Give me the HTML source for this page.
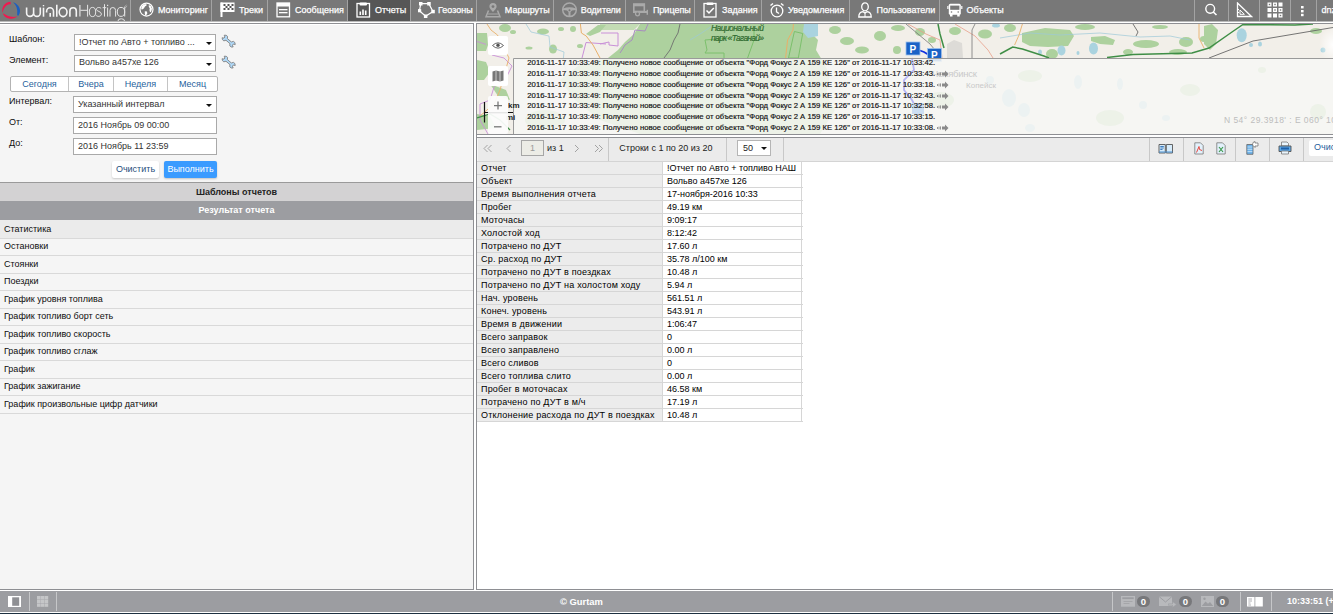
<!DOCTYPE html>
<html><head><meta charset="utf-8">
<style>
*{box-sizing:border-box;margin:0;padding:0}
html,body{width:1333px;height:614px;overflow:hidden;background:#fff;font-family:"Liberation Sans",sans-serif;font-size:9px;color:#222}
.a{position:absolute}
#hdr{left:0;top:0;width:1333px;height:21px;background:#787878}
#hdrline{left:0;top:21px;width:1333px;height:2px;background:#fff}
.sep{position:absolute;top:0;width:1px;height:21px;background:#a3a3a3}
.nt{position:absolute;top:5px;color:#fff;font-size:9px;line-height:11px;white-space:nowrap;-webkit-text-stroke:0.25px #fff}
.ni{position:absolute;top:3px}
#left{left:0;top:23px;width:474px;height:567px;background:#f5f5f5;border-right:1px solid #8e8f93;border-top:1px solid #8e8f93;border-bottom:1px solid #8e8f93}
.lbl{position:absolute;left:9px;color:#222;white-space:nowrap}
.sel{position:absolute;left:74px;width:143px;height:17px;background:#fff;border:1px solid #a9a9a9;padding-left:4px;line-height:15px;color:#333;white-space:nowrap}
.sel .arr{position:absolute;right:5px;top:6px;width:0;height:0;border-left:3px solid transparent;border-right:3px solid transparent;border-top:3px solid #222}
#right{left:476px;top:23px;width:857px;height:567px;background:#fff;border-left:1px solid #8e8f93;border-top:1px solid #8e8f93;border-bottom:1px solid #8e8f93}
#ftr{left:0;top:591px;width:1333px;height:21px;background:#9c9da1}
#ftrbot{left:0;top:613px;width:1333px;height:1px;background:#1d3040}

.lb{position:absolute;color:#0d0d0d;white-space:nowrap;font-size:9px;line-height:11px}
.sl{position:absolute;background:#fff;border:1px solid #a9a9a9;color:#333;white-space:nowrap;font-size:9px;line-height:11px}
.sl span{position:absolute;left:4px}
.ar{position:absolute;width:0;height:0;border-left:3px solid transparent;border-right:3px solid transparent;border-top:3.5px solid #111}
.bg{position:absolute;top:76px;height:16px;border:1px solid #b3b3b3;background:#fff;color:#1f5f9c;text-align:center;line-height:14px;font-size:9px}
.lr{position:absolute;left:0;width:473px;border-bottom:1px solid #d9d9d9;font-size:9px;line-height:11px;color:#0d0d0d;padding-left:4px;white-space:nowrap}

.msg{position:absolute;left:527.3px;font-size:7.7px;letter-spacing:0.02px;color:#111;white-space:nowrap;line-height:9px;-webkit-text-stroke:0.18px #111}
.msg i{display:inline-block;width:11px;height:7px;margin-left:3px;vertical-align:-1px}

.ts{position:absolute;top:138px;width:1px;height:23px;background:#c8c8c8}
.tr{position:absolute;left:477px;width:326px;height:13px;border-bottom:1px solid #d6d6d6;font-size:9px;line-height:12px;color:#000;white-space:nowrap}
.tr b{font-weight:normal;position:absolute;left:0;top:0;width:186px;height:12px;background:#ececec;border-right:1px solid #d6d6d6;padding-left:4px;letter-spacing:0.2px}
.tr u{text-decoration:none;position:absolute;left:186px;top:0;width:139px;height:12px;background:#fff;border-right:1px solid #d6d6d6;padding-left:4px}
</style></head><body>
<!-- HEADER -->
<div id="hdr" class="a">
<svg class="a" style="left:0;top:0" width="131" height="21" viewBox="0 0 131 21">
 <path d="M10.5 1.7 C6 1.6 2.6 5.5 2.3 9.5 C2.2 11 2.3 12 2.6 12.8 C3.2 10 4.2 7.2 6.5 5.4 C8 4.3 9.4 4.2 10.8 4.2 Z" fill="#f0194f"/>
 <path d="M2.8 13.2 C4 16.6 7.2 18.8 11 18.7 C13.6 18.6 15.8 17.8 17.4 16.6 C15 17.2 12.6 17.2 10.2 16.6 C7.2 15.8 4.8 14.2 2.8 13.2 Z" fill="#f0194f"/>
 <path d="M13.1 2.2 C17 3.5 19.8 6.5 20 10.5 C20.1 12.6 19.3 14.6 18.1 15.9 C17.4 15.5 17 14.8 17.2 13.8 C17.8 9.5 16.5 5.2 13.1 2.2 Z" fill="#1c5fc0"/>
 <g fill="none" stroke="#f4f4f4" stroke-width="1.6">
  <path d="M26.6 7.4 L26.6 12.9 A3.5 3.5 0 0 0 33.6 12.9 L33.6 7.4 M33.6 12.9 A3.35 3.5 0 0 0 40.3 12.9 L40.3 7.4"/>
  <path d="M43.5 7.7 L43.5 16.7"/>
  <path d="M46.6 12.4 L46.6 11.2 A3.45 3.45 0 0 1 53.5 11.2 L53.5 16.7 M50.2 13.1 L50.2 16.7"/>
  <path d="M56.8 4.8 L56.8 16.7"/>
  <ellipse cx="63.1" cy="12.1" rx="3.9" ry="4.5"/>
  <path d="M69.9 16.7 L69.9 11 A3.2 3.2 0 0 1 76.3 11 L76.3 16.7"/>
 </g>
 <rect x="42.8" y="5" width="1.4" height="1.3" fill="#f2f2f2"/>
 <g fill="none" stroke="#e6e6e6" stroke-width="1">
  <path d="M87.6 4.8 L87.6 16.6 M80 10.3 L87.6 10.3"/>
  <ellipse cx="92.5" cy="12" rx="3.2" ry="4.6"/>
  <path d="M101.2 8.6 C100 7 96.5 7 96.4 9.3 C96.4 11.6 101.4 11.2 101.4 14 C101.4 16.8 97 17 95.9 15.2"/>
  <path d="M104.5 4.2 L104.5 16.6 M102.6 7.7 L106.2 7.7"/>
  <path d="M107.6 7.6 L107.6 16.6"/>
  <path d="M110 16.6 L110 10.5 A2.8 3 0 0 1 115.6 10.5 L115.6 16.6"/>
  <ellipse cx="121" cy="11.9" rx="3.7" ry="4.5"/>
  <path d="M124.7 7.2 L124.7 16.5 M118 21 A3.2 2.2 0 0 1 124.5 21"/>
 </g>
 <path d="M79.9 5 L79.9 16.6" stroke="#c8c8c8" stroke-width="1.6"/>
 <rect x="107" y="4.8" width="1.2" height="1.2" fill="#e6e6e6"/>
 <path d="M123.8 7.5 L126.5 5 M124.8 8.3 L127.2 6" stroke="#d8d8d8" stroke-width="0.6"/>
</svg>
<div class="sep" style="left:130px"></div><div class="sep" style="left:211px"></div><div class="sep" style="left:267px"></div><div class="sep" style="left:347px"></div><div class="sep" style="left:410px"></div><div class="sep" style="left:476px"></div><div class="sep" style="left:553px"></div><div class="sep" style="left:625px"></div><div class="sep" style="left:694px"></div><div class="sep" style="left:761px"></div><div class="sep" style="left:849px"></div><div class="sep" style="left:939px"></div><div class="sep" style="left:1194px"></div><div class="sep" style="left:1228px"></div><div class="sep" style="left:1259px"></div><div class="sep" style="left:1290px"></div><div class="sep" style="left:1316px"></div>
<div class="a" style="left:348px;top:0;width:62px;height:21px;background:#565656"></div>
<!-- globe -->
<svg class="a" style="left:138px;top:1px" width="17" height="17" viewBox="0 0 17 17">
 <circle cx="8.5" cy="8.6" r="6.5" fill="none" stroke="#fff" stroke-width="1.2"/>
 <path d="M3.6 5.4 L5.4 3.6 L8.4 3 L8.6 4.4 L7 5.6 L5.8 7.6 L4.2 8.6 L3.2 8.2 Z" fill="#fff"/>
 <path d="M6.8 10.2 L9 10.4 L9.2 12.2 L8.2 14.6 L7.2 14.6 L6.8 12.4 Z" fill="#fff"/>
 <path d="M10.8 4 L12.8 5 L14 7.8 L13.2 10.8 L12 11.2 L11.4 9 L11.8 7.4 L10.8 5.8 Z" fill="#fff"/>
</svg>
<div class="nt" style="left:158px">Мониторинг</div>
<!-- flag -->
<svg class="a" style="left:220px;top:2px" width="16" height="16" viewBox="0 0 16 16">
 <rect x="0.5" y="0.5" width="2" height="14.5" fill="#fff"/>
 <rect x="0.5" y="0.5" width="14" height="9.5" fill="#fff"/>
 <g fill="#555"><rect x="3.5" y="2" width="2" height="2"/><rect x="7.5" y="2" width="2" height="2"/><rect x="11.5" y="2" width="2" height="2"/><rect x="5.5" y="4" width="2" height="2"/><rect x="9.5" y="4" width="2" height="2"/><rect x="3.5" y="6" width="2" height="2"/><rect x="7.5" y="6" width="2" height="2"/><rect x="11.5" y="6" width="2" height="2"/></g>
</svg>
<div class="nt" style="left:239px">Треки</div>
<!-- doc -->
<svg class="a" style="left:276px;top:2px" width="15" height="16" viewBox="0 0 15 16">
 <rect x="1" y="1" width="12.5" height="13.8" fill="none" stroke="#fff" stroke-width="1.3"/>
 <rect x="1" y="1" width="12.5" height="3.5" fill="#fff"/>
 <rect x="3" y="7" width="8.5" height="1.3" fill="#fff"/>
 <rect x="3" y="10" width="8.5" height="1.3" fill="#fff"/>
</svg>
<div class="nt" style="left:295px">Сообщения</div>
<!-- reports -->
<svg class="a" style="left:356px;top:2px" width="15" height="16" viewBox="0 0 15 16">
 <rect x="1" y="1.5" width="12.5" height="13.5" fill="none" stroke="#fff" stroke-width="1.3"/>
 <rect x="3.5" y="0.5" width="7.5" height="3" rx="1" fill="#fff"/>
 <rect x="3.5" y="9.5" width="1.6" height="3.5" fill="#fff"/><rect x="6.2" y="7.5" width="1.6" height="5.5" fill="#fff"/><rect x="8.9" y="8.5" width="1.6" height="4.5" fill="#fff"/>
</svg>
<div class="nt" style="left:375px">Отчеты</div>
<!-- geozones -->
<svg class="a" style="left:418px;top:2px" width="17" height="16" viewBox="0 0 17 16">
 <path d="M2.8 1.6 L10.8 1.6 L15 9.5 L7.6 14.3 L1.4 8.8 Z" fill="none" stroke="#fff" stroke-width="1.2"/>
 <g fill="#fff"><rect x="1" y="0" width="3.5" height="3.5"/><rect x="9.2" y="0" width="3.5" height="3.5"/><rect x="13.3" y="7.8" width="3.5" height="3.5"/><rect x="5.9" y="12.5" width="3.5" height="3.5"/><rect x="0" y="7.1" width="3.2" height="3.2"/></g>
</svg>
<div class="nt" style="left:438px">Геозоны</div>
<!-- route (gray) -->
<svg class="a" style="left:485px;top:2px" width="16" height="16" viewBox="0 0 16 16">
 <path d="M8 1 A3.6 3.6 0 0 1 11.6 4.6 C11.6 7 8 10 8 10 C8 10 4.4 7 4.4 4.6 A3.6 3.6 0 0 1 8 1 Z" fill="#aaa"/>
 <circle cx="8" cy="4.6" r="1.4" fill="#787878"/>
 <path d="M3.5 8.5 L1 14.8 L15 14.8 L12.5 8.5" fill="none" stroke="#aaa" stroke-width="1.5"/>
 <path d="M3 12 L13 12" stroke="#aaa" stroke-width="1"/>
</svg>
<div class="nt" style="left:504.8px">Маршруты</div>
<!-- wheel (gray) -->
<svg class="a" style="left:561px;top:2px" width="17" height="16" viewBox="0 0 17 16">
 <circle cx="8.5" cy="7.8" r="6.8" fill="none" stroke="#aaa" stroke-width="1.5"/>
 <path d="M2 6.5 Q8.5 4 15 6.5 L15 8 L11 8.5 L9.5 10 L9.5 14.5 L7.5 14.5 L7.5 10 L6 8.5 L2 8 Z" fill="#aaa"/>
 <circle cx="8.5" cy="8.2" r="1" fill="#787878"/>
</svg>
<div class="nt" style="left:580.8px">Водители</div>
<!-- trailer (gray) -->
<svg class="a" style="left:633px;top:3px" width="16" height="14" viewBox="0 0 16 14">
 <rect x="0.8" y="1" width="10.5" height="7.5" fill="none" stroke="#aaa" stroke-width="1.6"/>
 <rect x="0.8" y="1" width="10.5" height="2.3" fill="#aaa"/>
 <rect x="0" y="8" width="14" height="2" fill="#aaa"/>
 <rect x="13.6" y="6.8" width="1.4" height="5" fill="#aaa"/>
 <circle cx="4.5" cy="10.8" r="2" fill="#787878" stroke="#aaa" stroke-width="1.3"/>
</svg>
<div class="nt" style="left:652.9px">Прицепы</div>
<!-- task -->
<svg class="a" style="left:703px;top:2px" width="15" height="16" viewBox="0 0 15 16">
 <rect x="1" y="1.5" width="12" height="13.5" fill="none" stroke="#fff" stroke-width="1.3"/>
 <rect x="3.5" y="0.5" width="7" height="2.5" rx="1" fill="#fff"/>
 <path d="M3.5 8.5 L6 11 L10.8 6" fill="none" stroke="#fff" stroke-width="1.5"/>
</svg>
<div class="nt" style="left:722px">Задания</div>
<!-- clock -->
<svg class="a" style="left:769px;top:2px" width="16" height="16" viewBox="0 0 16 16">
 <circle cx="8" cy="9" r="5.8" fill="none" stroke="#fff" stroke-width="1.3"/>
 <path d="M7.5 5.5 L7.5 9.8 L10 11.5" fill="none" stroke="#fff" stroke-width="1.3"/>
 <path d="M1.5 3.5 L4 1.5 M14.5 3.5 L12 1.5" stroke="#fff" stroke-width="1.5"/>
</svg>
<div class="nt" style="left:788px">Уведомления</div>
<!-- user -->
<svg class="a" style="left:858px;top:2px" width="14" height="16" viewBox="0 0 14 16">
 <ellipse cx="7" cy="4.8" rx="3.3" ry="4" fill="none" stroke="#fff" stroke-width="1.3"/>
 <path d="M0.8 15 C0.8 11 3 9.8 5 9.6 L7 11 L9 9.6 C11 9.8 13.2 11 13.2 15 Z" fill="none" stroke="#fff" stroke-width="1.3"/>
 <path d="M7 11 L7 15" stroke="#fff" stroke-width="1"/>
</svg>
<div class="nt" style="left:876.6px">Пользователи</div>
<!-- bus -->
<svg class="a" style="left:947px;top:3px" width="16" height="14" viewBox="0 0 16 14">
 <rect x="1.8" y="0.8" width="12" height="11" rx="1.5" fill="#fff"/>
 <rect x="3.2" y="2.6" width="9.2" height="4.2" fill="#787878"/>
 <rect x="0.3" y="3" width="1.2" height="3" fill="#fff"/><rect x="14.2" y="3" width="1.2" height="3" fill="#fff"/>
 <rect x="3" y="11" width="2.5" height="2.5" fill="#fff"/><rect x="10.2" y="11" width="2.5" height="2.5" fill="#fff"/>
 <circle cx="4.5" cy="9" r="0.8" fill="#787878"/><circle cx="11.2" cy="9" r="0.8" fill="#787878"/>
</svg>
<div class="nt" style="left:966.6px">Объекты</div>
<!-- search -->
<svg class="a" style="left:1203px;top:3px" width="16" height="15" viewBox="0 0 16 15">
 <circle cx="7.2" cy="5.8" r="4.4" fill="none" stroke="#fff" stroke-width="1.4"/>
 <path d="M10.3 9 L13.5 12" stroke="#fff" stroke-width="1.6"/>
</svg>
<!-- ruler -->
<svg class="a" style="left:1236px;top:2px" width="17" height="16" viewBox="0 0 17 16">
 <path d="M1.5 1 L1.5 14.5 L15.5 14.5 Z" fill="none" stroke="#fff" stroke-width="1.3"/>
 <path d="M4 8 L4 12.3 L8.4 12.3 Z" fill="none" stroke="#fff" stroke-width="1"/>
 <path d="M1.5 7.5 L3 7.5 M1.5 10.5 L3 10.5" stroke="#fff" stroke-width="1"/>
</svg>
<!-- grid -->
<svg class="a" style="left:1267px;top:2px" width="16" height="16" viewBox="0 0 16 16">
 <g fill="#fff"><rect x="0.5" y="0.5" width="4" height="4"/><rect x="6" y="0.5" width="4" height="4"/><rect x="11.5" y="0.5" width="4" height="4"/><rect x="0.5" y="6" width="4" height="4"/><rect x="6" y="6" width="4" height="4"/><rect x="11.5" y="6" width="4" height="4"/><rect x="0.5" y="11.5" width="4" height="4"/><rect x="6" y="11.5" width="4" height="4"/><rect x="11.5" y="11.5" width="4" height="4"/></g>
 <g fill="#787878"><rect x="1.8" y="1.8" width="1.4" height="1.4"/><rect x="7.3" y="1.8" width="1.4" height="1.4"/><rect x="7.3" y="7.3" width="1.4" height="1.4"/><rect x="12.8" y="7.3" width="1.4" height="1.4"/><rect x="12.8" y="12.8" width="1.4" height="1.4"/></g>
</svg>
<!-- dots -->
<svg class="a" style="left:1300px;top:5px" width="5" height="12" viewBox="0 0 5 12">
 <g fill="#fff"><rect x="1" y="1" width="2.6" height="2.4"/><rect x="1" y="5" width="2.6" height="2.4"/><rect x="1" y="8.8" width="2.6" height="2.4"/></g>
</svg>
<div class="nt" style="left:1321.5px">dnz</div>
</div>
<div id="hdrline" class="a"></div><div class="a" style="left:0;top:21px;width:1333px;height:1px;background:#b9b9b9"></div>

<!-- LEFT PANEL -->
<div id="left" class="a"></div>
<div class="a" style="left:0;top:24px;width:473px;height:1px;background:#fff"></div>
<div class="a" style="left:472px;top:24px;width:1px;height:158px;background:#fbfbfb"></div>
<div class="lb" style="left:9px;top:33.5px">Шаблон:</div>
<div class="sl" style="left:74px;top:34px;width:142px;height:17px"><span style="top:1.5px">!Отчет по Авто + топливо ...</span><i class="ar" style="left:130.5px;top:7px"></i></div>
<svg class="a" style="left:221px;top:34px" width="15" height="15" viewBox="0 0 15 15"><g transform="translate(7.5 7.5) scale(0.9) translate(-7.5 -7.5) rotate(40 7.5 7.3)"><path d="M-0.5 5.2 L1.2 3.8 L3.2 3.8 L4.6 5.8 L10.4 5.8 L11.8 3.8 L13.8 3.8 L15.5 5.2 L13.6 6.2 L13.6 7.8 L15.5 8.8 L13.8 10.2 L11.8 10.2 L10.4 8.2 L4.6 8.2 L3.2 10.2 L1.2 10.2 L-0.5 8.8 L1.4 7.8 L1.4 6.2 Z" fill="#b0d9f8" stroke="#7d7d7d" stroke-width="0.9" stroke-linejoin="round"/></g></svg>
<div class="lb" style="left:9px;top:54.5px">Элемент:</div>
<div class="sl" style="left:74px;top:55px;width:142px;height:17px"><span style="top:1.2px">Вольво а457хе 126</span><i class="ar" style="left:130.5px;top:7px"></i></div>
<svg class="a" style="left:221px;top:55px" width="15" height="15" viewBox="0 0 15 15"><g transform="translate(7.5 7.5) scale(0.9) translate(-7.5 -7.5) rotate(40 7.5 7.3)"><path d="M-0.5 5.2 L1.2 3.8 L3.2 3.8 L4.6 5.8 L10.4 5.8 L11.8 3.8 L13.8 3.8 L15.5 5.2 L13.6 6.2 L13.6 7.8 L15.5 8.8 L13.8 10.2 L11.8 10.2 L10.4 8.2 L4.6 8.2 L3.2 10.2 L1.2 10.2 L-0.5 8.8 L1.4 7.8 L1.4 6.2 Z" fill="#b0d9f8" stroke="#7d7d7d" stroke-width="0.9" stroke-linejoin="round"/></g></svg>
<div class="a" style="left:10px;top:76px;width:208px;height:16px;border:1px solid #b3b3b3;border-radius:2px;background:#fff"></div>
<div class="a" style="left:68px;top:77px;width:1px;height:14px;background:#c4c4c4"></div>
<div class="a" style="left:113px;top:77px;width:1px;height:14px;background:#c4c4c4"></div>
<div class="a" style="left:167px;top:77px;width:1px;height:14px;background:#c4c4c4"></div>
<div class="lb" style="left:11px;top:78.5px;width:57px;text-align:center;color:#1f5f9c">Сегодня</div>
<div class="lb" style="left:69px;top:78.5px;width:44px;text-align:center;color:#1f5f9c">Вчера</div>
<div class="lb" style="left:114px;top:78.5px;width:53px;text-align:center;color:#1f5f9c">Неделя</div>
<div class="lb" style="left:168px;top:78.5px;width:49px;text-align:center;color:#1f5f9c">Месяц</div>
<div class="lb" style="left:9px;top:95.7px">Интервал:</div>
<div class="sl" style="left:73px;top:96px;width:144px;height:17px"><span style="top:1.8px">Указанный интервал</span><i class="ar" style="left:131.5px;top:7px"></i></div>
<div class="lb" style="left:9px;top:116.6px">От:</div>
<div class="sl" style="left:73px;top:117px;width:144px;height:17px"><span style="top:2px">2016 Ноябрь 09 00:00</span></div>
<div class="lb" style="left:9px;top:137.8px">До:</div>
<div class="sl" style="left:73px;top:138px;width:144px;height:17px"><span style="top:2px">2016 Ноябрь 11 23:59</span></div>
<div class="a" style="left:112px;top:161px;width:47px;height:17px;background:#fff;border-radius:2px;box-shadow:0 1px 2px rgba(0,0,0,0.18);color:#1f4f7c;text-align:center;line-height:17px">Очистить</div>
<div class="a" style="left:164px;top:161px;width:53px;height:17px;background:#3a9bff;border-radius:2px;box-shadow:0 1px 2px rgba(0,0,0,0.2);color:#fff;text-align:center;line-height:17px">Выполнить</div>
<div class="a" style="left:0;top:182px;width:473px;height:19px;background:#d3d2d3;border-top:1px solid #9a9a9a;color:#222;font-weight:bold;text-align:center;line-height:18px">Шаблоны отчетов</div>
<div class="a" style="left:0;top:201px;width:473px;height:19px;background:#9c9da1;color:#fff;font-weight:bold;text-align:center;line-height:18px">Результат отчета</div>
<div class="lr" style="top:220px;height:19px;padding-top:4px;background:#ebebeb;">Статистика</div>
<div class="lr" style="top:239px;height:17px;padding-top:2px;">Остановки</div>
<div class="lr" style="top:256px;height:18px;padding-top:3px;">Стоянки</div>
<div class="lr" style="top:274px;height:17px;padding-top:2px;">Поездки</div>
<div class="lr" style="top:291px;height:18px;padding-top:3px;">График уровня топлива</div>
<div class="lr" style="top:309px;height:17px;padding-top:2px;">График топливо борт сеть</div>
<div class="lr" style="top:326px;height:18px;padding-top:3px;">График топливо скорость</div>
<div class="lr" style="top:344px;height:17px;padding-top:2px;">График топливо сглаж</div>
<div class="lr" style="top:361px;height:18px;padding-top:3px;">График</div>
<div class="lr" style="top:379px;height:17px;padding-top:2px;">График зажигание</div>
<div class="lr" style="top:396px;height:18px;padding-top:3px;">График произвольные цифр датчики</div>


<!-- RIGHT PANEL -->
<div id="right" class="a"></div>
<!-- MAP -->
<svg class="a" style="left:477px;top:24px" width="856" height="110" viewBox="477 24 856 110">
 <rect x="477" y="24" width="856" height="110" fill="#f2efe9"/>
 <g fill="#add19e">
  <path d="M600 24 L813 24 L810 32 L818 40 L816 50 L822 60 L830 75 L826 95 L835 110 L820 134 L640 134 L600 120 L575 100 L560 80 L578 66 L608 58 L618 50 L625 42 L634 34 L640 24 Z"/>
  <path d="M600 24 L640 24 L634 30 L600 30 Z" fill="#c3dcb4"/>
  <path d="M477 33 L487 33 L488 45 L486 51 L477 51 Z"/>
  <path d="M477 60 L486 62 L490 72 L484 80 L477 80 Z"/>
  <path d="M490 84 L506 90 L510 100 L498 96 Z"/>
  <path d="M477 114 L490 116 L496 128 L477 130 Z"/>
  <ellipse cx="505" cy="28" rx="6" ry="4"/>
  <ellipse cx="513" cy="32" rx="3" ry="2"/>
  <ellipse cx="543" cy="31.5" rx="6" ry="3"/>
  <ellipse cx="553" cy="49" rx="4" ry="4.5"/>
  <ellipse cx="529" cy="48" rx="3.5" ry="1.5"/>
  <ellipse cx="561" cy="29" rx="3" ry="2"/>
  <ellipse cx="573" cy="29" rx="3" ry="3"/>
  <path d="M586 34 L598 25 L606 25 L600 32 L590 36 Z"/>
  <ellipse cx="580" cy="46" rx="3" ry="2"/>
  <ellipse cx="835" cy="30" rx="6" ry="4"/>
  <ellipse cx="847" cy="41" rx="7" ry="4"/>
  <ellipse cx="862" cy="50" rx="7" ry="3.5"/>
  <ellipse cx="880" cy="36" rx="6" ry="5"/>
  <ellipse cx="898" cy="28" rx="7" ry="3"/>
  <ellipse cx="897" cy="50" rx="4" ry="4"/>
  <ellipse cx="920" cy="32" rx="5" ry="4"/>
  <ellipse cx="932" cy="40" rx="4" ry="3"/>
  <ellipse cx="955" cy="31" rx="6" ry="4"/>
  <ellipse cx="985" cy="34" rx="7" ry="4.5"/>
  <ellipse cx="1010" cy="28" rx="6" ry="4"/>
  <path d="M1022 33 L1045 28 L1070 30 L1074 36 L1068 46 L1048 47 L1030 46 L1022 42 Z"/>
  <ellipse cx="1052" cy="54" rx="6" ry="5"/>
  <ellipse cx="1085" cy="27" rx="10" ry="3"/>
  <path d="M1091 37 L1105 36 L1115 40 L1113 45 L1100 44 L1091 41 Z"/>
  <ellipse cx="1128" cy="52" rx="5" ry="3"/>
  <ellipse cx="1146" cy="44" rx="13" ry="4"/>
  <ellipse cx="1186" cy="42" rx="7" ry="5"/>
  <ellipse cx="1204" cy="39" rx="4" ry="3"/>
  <path d="M1204 26 L1212 24 L1218 30 L1216 44 L1210 50 L1204 44 Z"/>
  <ellipse cx="1178" cy="52" rx="9" ry="3"/>
  <ellipse cx="1316" cy="31" rx="6" ry="3"/>
  <ellipse cx="1160" cy="27" rx="8" ry="2"/>
  <!-- under overlay -->
  <ellipse cx="940" cy="100" rx="14" ry="8"/>
  <ellipse cx="1030" cy="76" rx="12" ry="6"/>
  <ellipse cx="1110" cy="118" rx="14" ry="8"/>
  <ellipse cx="1190" cy="90" rx="10" ry="6"/>
  <ellipse cx="1318" cy="112" rx="8" ry="8"/>
  <ellipse cx="1262" cy="70" rx="4" ry="3"/>
  <ellipse cx="545" cy="120" rx="20" ry="10"/>
 </g>
 <g fill="#aad3df">
  <path d="M804 24 L818 24 L818 36 L808 38 L803 32 Z"/>
  <ellipse cx="1061.5" cy="50.5" rx="4" ry="5"/>
  <ellipse cx="1040" cy="52" rx="2" ry="2.5"/>
  <ellipse cx="1093.5" cy="48.5" rx="4.5" ry="6"/>
  <ellipse cx="1078" cy="53" rx="1.5" ry="2"/>
  <ellipse cx="996" cy="25.5" rx="4" ry="2"/>
  <ellipse cx="1241.7" cy="35.2" rx="5" ry="7"/>
  <ellipse cx="1251" cy="45" rx="2" ry="2"/>
  <ellipse cx="1260" cy="44" rx="2" ry="2.5"/>
  <ellipse cx="1323" cy="50" rx="2.5" ry="2.5"/>
  <ellipse cx="1009" cy="98" rx="7" ry="9"/>
  <ellipse cx="1024" cy="110" rx="6" ry="7"/>
  <ellipse cx="1078" cy="82" rx="4" ry="7"/>
  <ellipse cx="1120" cy="84" rx="3" ry="6"/>
  <ellipse cx="990" cy="80" rx="4" ry="4"/>
  <ellipse cx="1143" cy="105" rx="4" ry="4"/>
  <ellipse cx="1030" cy="128" rx="5" ry="4"/>
  <ellipse cx="1166" cy="118" rx="4" ry="3"/>
 </g>
 <g fill="none" stroke="#9cc8d8" stroke-width="0.7">
  <path d="M526 24 L531 32 L549 36 L550 47 L564 52 L563 62 L570 80"/>
  <path d="M1000 38 L1030 33 L1060 35 L1100 33 L1140 37 L1170 36 L1190 40"/>
  <path d="M690 40 L700 34 L712 26"/>
 </g>
 <path d="M947 44 L954 40 L962 43 L963 58 L947 58 Z" fill="#dddbd7"/>
 <!-- boundaries -->
 <path d="M601 33 L618 33 L618 46 L609 45 L609 42 L600 44" fill="none" stroke="#c990d8" stroke-width="1"/>
 <path d="M582 58 L586 42.5 L606 44" fill="none" stroke="#c990d8" stroke-width="1"/>
 <path d="M648 24 L645 31 L635 30 L632 40 L625 45 L622 50 L620 53" fill="none" stroke="#a88cc0" stroke-width="1"/>
 <path d="M477 41.5 L486 44.4 M492 55 L504 58 L512 66 L505 80 L495 84 L490 100 L480 104 L480 120 L488 134" fill="none" stroke="#c990d8" stroke-width="0.9"/>
 <path d="M754 30 L754 40 L747.6 58 M794.4 31.5 L802.7 33.5 L798.3 58 L788.5 58 Z M730 38 L705 40 L707 50 L705 53 L724 53 L724 58" fill="none" stroke="#7cc06c" stroke-width="1"/>
 <!-- roads -->
 <path d="M487 24 L491 30 L497.5 35 L509 58 L500 90 L494 104 L480 116" fill="none" stroke="#e9b06a" stroke-width="0.9"/>
 <path d="M580.4 24 L581.4 33 L586.2 36 L593 45 L600 58" fill="none" stroke="#e9b06a" stroke-width="1"/>
 <path d="M793.4 24 L793 30 L787.6 40 L785.6 58" fill="none" stroke="#e9b06a" stroke-width="1"/>
 <path d="M1022.4 24 L1019 35 L1014.6 45" fill="none" stroke="#e9b06a" stroke-width="0.9"/>
 <path d="M1199 24 L1199 38 L1204 48" fill="none" stroke="#e9b06a" stroke-width="0.9"/>
 <path d="M908 24 L926 34 L940 40 L942 58 M955 24 L975 36 L988 50 L993 58" fill="none" stroke="#e8a08a" stroke-width="0.8"/>
 <path d="M680 24 L678 33 L674 40 L670 50 L664 58" fill="none" stroke="#6e6e6e" stroke-width="0.9"/>
 <path d="M906 24 L930 44 L935 50" fill="none" stroke="#777" stroke-width="0.8"/>
 <path d="M975 24 L972 30 L972 58" fill="none" stroke="#777" stroke-width="0.8"/>
 <path d="M1133 24 L1138 32 L1136 36" fill="none" stroke="#555" stroke-width="0.8"/>
 <path d="M1209 58 L1253 41 L1333 27.5" fill="none" stroke="#666" stroke-width="0.9"/>
 <path d="M938 24 L940 34 L944 48" fill="none" stroke="#3f8e46" stroke-width="1.5"/>
 <path d="M477 118 L490 114 L500 120 L510 130" fill="none" stroke="#3f8e46" stroke-width="1.3"/>
 <path d="M1000 54 L1012.7 47 L1022.4 49 L1043.9 56 L1049 58 M1107 57.5 L1133 54.5 L1192 53 L1209 48 L1232 32 L1243 24.5 L1295 25 L1313 24" fill="none" stroke="#3f8e46" stroke-width="1.5"/>
 <text x="711" y="30.5" font-family="Liberation Sans" font-style="italic" font-size="8.5" fill="#2f6a2f" stroke="#2f6a2f" stroke-width="0.2" textLength="53">Национальный</text>
 <text x="711" y="40.5" font-family="Liberation Sans" font-style="italic" font-size="8.5" fill="#2f6a2f" stroke="#2f6a2f" stroke-width="0.2" textLength="53">парк «Таганай»</text>
 <radialGradient id="gl" cx="0.5" cy="0.5" r="0.5"><stop offset="0" stop-color="#fff" stop-opacity="0.95"/><stop offset="1" stop-color="#fff" stop-opacity="0"/></radialGradient>
 <ellipse cx="1333" cy="45" rx="14" ry="18" fill="url(#gl)"/>
 <!-- parking markers and track -->
 <path d="M913 48 L924 52 L934 58" fill="none" stroke="#1030e0" stroke-width="1.8"/>
 <rect x="906" y="42" width="14" height="13" fill="#1a62c6" stroke="#9cc2ee" stroke-width="0.8"/>
 <text x="909.5" y="52.5" font-family="Liberation Sans" font-weight="bold" font-size="10" fill="#fff">P</text>
 <rect x="927.5" y="48.5" width="14" height="13" fill="#1a62c6" stroke="#9cc2ee" stroke-width="0.8"/>
 <text x="931" y="59" font-family="Liberation Sans" font-weight="bold" font-size="10" fill="#fff">P</text>
 <!-- overlay -->
 <rect x="513" y="58" width="820" height="76" fill="#f7f7f5" opacity="0.86"/>
 <path d="M912 58 L914 70 L904 80 L904 90 L912 100 L915 106" fill="none" stroke="#b4b4f4" stroke-width="1.8"/>
 <rect x="912" y="103" width="12" height="11" fill="#c8dcf2" opacity="0.9"/>
 <text x="932" y="77" font-family="Liberation Sans" font-size="9.5" fill="#c9c9c9" textLength="45">Челябинск</text>
 <text x="966" y="88" font-family="Liberation Sans" font-size="8" fill="#c9c9c9" textLength="30">Копейск</text>
 <path d="M513.5 134 L513.5 58.5 L1333 58.5" fill="none" stroke="#9a9a9a" stroke-width="1"/>
 <text x="1224" y="123" font-family="Liberation Sans" font-size="8.5" fill="#bdbdbd" textLength="112">N 54° 29.3918' : E 060° 10</text>
 <!-- buttons -->
 <rect x="488" y="36" width="20" height="19" rx="2" fill="#fff"/>
 <path d="M492.5 45.5 Q498 40.2 503.5 45.5 Q498 50.8 492.5 45.5 Z" fill="none" stroke="#555" stroke-width="0.9"/>
 <circle cx="498" cy="45.2" r="1.7" fill="#555"/>
 <rect x="488" y="66" width="20" height="20" rx="2" fill="#fff"/>
 <path d="M492.5 71.5 L496 70.5 L500 71.5 L503.5 70.5 L503.5 80.5 L500 81.5 L496 80.5 L492.5 81.5 Z" fill="#777"/>
 <path d="M496 70.5 L496 80.5 M500 71.5 L500 81.5" stroke="#fff" stroke-width="0.6"/>
 <path d="M484.5 102 L484.5 122.5 M484.5 112.5 L513 112.5" stroke="#111" stroke-width="1.2"/>
 <text x="508" y="108" font-family="Liberation Sans" font-weight="bold" font-size="8" fill="#222">km</text>
 <text x="506" y="120" font-family="Liberation Sans" font-weight="bold" font-size="8" fill="#222">mi</text>
 <rect x="488" y="96" width="20" height="38" rx="2" fill="#fcfcfc" opacity="0.94"/>
 <path d="M494 105.6 L502 105.6 M498 101.6 L498 109.6" stroke="#777" stroke-width="1.3"/>
 <path d="M494 126.8 L501.5 126.8" stroke="#777" stroke-width="1.3"/>
 <path d="M488 112.8 L508 112.8" stroke="#e2e2e2" stroke-width="1"/>
</svg>
<div class="a" style="left:513px;top:59px;width:820px;height:75px;overflow:hidden">
<div class="msg" style="left:14.3px;top:-0.9px">2016-11-17 10:33:49: Получено новое сообщение от объекта "Форд Фокус 2 А 159 КЕ 126" от 2016-11-17 10:33:42.</div>
<div class="msg" style="left:14.3px;top:9.9px">2016-11-17 10:33:49: Получено новое сообщение от объекта "Форд Фокус 2 А 159 КЕ 126" от 2016-11-17 10:33:43.</div>
<svg style="position:absolute;left:423.5px;top:11.3px" width="12" height="8" viewBox="0 0 12 8"><path d="M0.5 3 L0.5 5 M2 2.6 L2 5.4 M3.5 2.4 L3.5 5.6" stroke="#8a8a8a" stroke-width="0.9"/><path d="M5 2.4 L8 2.4 L8 0.5 L11.5 4 L8 7.5 L8 5.6 L5 5.6 Z" fill="#8a8a8a"/></svg>
<div class="msg" style="left:14.3px;top:20.7px">2016-11-17 10:33:49: Получено новое сообщение от объекта "Форд Фокус 2 А 159 КЕ 126" от 2016-11-17 10:33:18.</div>
<svg style="position:absolute;left:423.5px;top:22.1px" width="12" height="8" viewBox="0 0 12 8"><path d="M0.5 3 L0.5 5 M2 2.6 L2 5.4 M3.5 2.4 L3.5 5.6" stroke="#8a8a8a" stroke-width="0.9"/><path d="M5 2.4 L8 2.4 L8 0.5 L11.5 4 L8 7.5 L8 5.6 L5 5.6 Z" fill="#8a8a8a"/></svg>
<div class="msg" style="left:14.3px;top:31.5px">2016-11-17 10:33:49: Получено новое сообщение от объекта "Форд Фокус 2 А 159 КЕ 126" от 2016-11-17 10:32:43.</div>
<svg style="position:absolute;left:423.5px;top:32.9px" width="12" height="8" viewBox="0 0 12 8"><path d="M0.5 3 L0.5 5 M2 2.6 L2 5.4 M3.5 2.4 L3.5 5.6" stroke="#8a8a8a" stroke-width="0.9"/><path d="M5 2.4 L8 2.4 L8 0.5 L11.5 4 L8 7.5 L8 5.6 L5 5.6 Z" fill="#8a8a8a"/></svg>
<div class="msg" style="left:14.3px;top:42.3px">2016-11-17 10:33:49: Получено новое сообщение от объекта "Форд Фокус 2 А 159 КЕ 126" от 2016-11-17 10:32:58.</div>
<svg style="position:absolute;left:423.5px;top:43.7px" width="12" height="8" viewBox="0 0 12 8"><path d="M0.5 3 L0.5 5 M2 2.6 L2 5.4 M3.5 2.4 L3.5 5.6" stroke="#8a8a8a" stroke-width="0.9"/><path d="M5 2.4 L8 2.4 L8 0.5 L11.5 4 L8 7.5 L8 5.6 L5 5.6 Z" fill="#8a8a8a"/></svg>
<div class="msg" style="left:14.3px;top:53.1px">2016-11-17 10:33:49: Получено новое сообщение от объекта "Форд Фокус 2 А 159 КЕ 126" от 2016-11-17 10:33:15.</div>
<div class="msg" style="left:14.3px;top:63.9px">2016-11-17 10:33:49: Получено новое сообщение от объекта "Форд Фокус 2 А 159 КЕ 126" от 2016-11-17 10:33:08.</div>
<svg style="position:absolute;left:423.5px;top:65.3px" width="12" height="8" viewBox="0 0 12 8"><path d="M0.5 3 L0.5 5 M2 2.6 L2 5.4 M3.5 2.4 L3.5 5.6" stroke="#8a8a8a" stroke-width="0.9"/><path d="M5 2.4 L8 2.4 L8 0.5 L11.5 4 L8 7.5 L8 5.6 L5 5.6 Z" fill="#8a8a8a"/></svg>
</div>
<div class="a" style="left:477px;top:134px;width:856px;height:1px;background:#8e8f93"></div>
<div class="a" style="left:477px;top:135px;width:856px;height:2px;background:#fff"></div>
<div class="a" style="left:477px;top:137px;width:856px;height:25px;background:#ebebeb;border-top:1px solid #8e8f93;border-bottom:1px solid #d4d4d4"></div>
<div class="a" style="left:477px;top:138px;width:1px;height:23px;background:#f6f6f6"></div>
<svg class="a" style="left:483px;top:144px" width="10" height="10" viewBox="0 0 10 10"><path d="M4.5 1 L1 4.5 L4.5 8 M8.5 1 L5 4.5 L8.5 8" fill="none" stroke="#9a9a9a" stroke-width="0.9"/></svg>
<svg class="a" style="left:506px;top:144px" width="6" height="10" viewBox="0 0 6 10"><path d="M4.5 1 L1 4.5 L4.5 8" fill="none" stroke="#9a9a9a" stroke-width="0.9"/></svg>
<div class="a" style="left:521px;top:140px;width:23px;height:16px;background:#ecece6;border:1px solid #a6a6a6;color:#999;text-align:center;line-height:15px;font-size:9px">1</div>
<div class="lb" style="left:547px;top:142.5px;color:#222">из 1</div>
<svg class="a" style="left:574px;top:144px" width="6" height="10" viewBox="0 0 6 10"><path d="M1 1 L4.5 4.5 L1 8" fill="none" stroke="#9a9a9a" stroke-width="0.9"/></svg>
<svg class="a" style="left:594px;top:144px" width="10" height="10" viewBox="0 0 10 10"><path d="M1 1 L4.5 4.5 L1 8 M5 1 L8.5 4.5 L5 8" fill="none" stroke="#9a9a9a" stroke-width="0.9"/></svg>
<div class="ts" style="left:608px"></div>
<div class="lb" style="left:619.3px;top:142.5px;color:#222">Строки с 1 по 20 из 20</div>
<div class="ts" style="left:726px"></div>
<div class="a" style="left:737px;top:140px;width:34px;height:16px;background:#fff;border:1px solid #b5b5b5;color:#222;line-height:14.5px;font-size:9px;padding-left:5px">50<i class="ar" style="left:23px;top:6px"></i></div>
<div class="ts" style="left:783px"></div>
<div class="ts" style="left:1149px"></div>
<svg class="a" style="left:1158px;top:143px" width="16" height="11" viewBox="0 0 16 11"><path d="M1 1.5 L7.3 1.5 L7.3 10 L1 10 Z" fill="#d6ebfa" stroke="#555" stroke-width="0.9"/><path d="M8.3 1.5 L14.5 1.5 L14.5 10 L8.3 10 Z" fill="#d6ebfa" stroke="#555" stroke-width="0.9"/><path d="M2.3 3.5 L5.8 3.5 M2.3 5 L5.8 5 M2.3 6.5 L4.5 6.5" stroke="#2a6fb8" stroke-width="0.9"/><path d="M1 9 L14.5 9" stroke="#4a8fd0" stroke-width="1"/></svg>
<div class="ts" style="left:1183px"></div>
<svg class="a" style="left:1194px;top:142px" width="10" height="13" viewBox="0 0 10 13"><path d="M0.8 0.8 L6.5 0.8 L9.2 3.5 L9.2 12 L0.8 12 Z" fill="#e3f1fb" stroke="#777" stroke-width="0.8"/><path d="M2.5 10.5 L5 4.5 L5.5 7.5 L8 8.5" fill="none" stroke="#e8453c" stroke-width="1"/></svg>
<svg class="a" style="left:1216px;top:142px" width="10" height="13" viewBox="0 0 10 13"><path d="M0.8 0.8 L6.5 0.8 L9.2 3.5 L9.2 12 L0.8 12 Z" fill="#e3f1fb" stroke="#777" stroke-width="0.8"/><path d="M3 5 L7 10 M7 5 L3 10" stroke="#3d9a4d" stroke-width="1.2"/></svg>
<div class="ts" style="left:1235px"></div>
<svg class="a" style="left:1246px;top:141px" width="13" height="14" viewBox="0 0 13 14"><path d="M0.8 3.5 L7 3.5 L7 13.3 L0.8 13.3 Z" fill="#6cb2ea" stroke="#666" stroke-width="0.8"/><path d="M1.5 6 L6.3 6 M1.5 8.3 L6.3 8.3 M1.5 10.6 L6.3 10.6" stroke="#c7e3f8" stroke-width="0.9"/><path d="M7 1.5 L9 0.5 L9 2 L12 2 L12 5 L9 5 L9 6.5 L6.5 4 Z" fill="#fff" stroke="#666" stroke-width="0.7"/></svg>
<div class="ts" style="left:1269px"></div>
<svg class="a" style="left:1278px;top:141px" width="14" height="14" viewBox="0 0 14 14"><path d="M3.5 1 L9 1 L10.5 2.5 L10.5 5 L3.5 5 Z" fill="#e8f4fc" stroke="#777" stroke-width="0.8"/><path d="M1 5 L13 5 L13 10.5 L1 10.5 Z" fill="#5aa6e6" stroke="#555" stroke-width="0.9" stroke-linejoin="round"/><rect x="3" y="6.5" width="8" height="2" fill="#1c5fa8"/><path d="M3.5 10 L10.5 10 L10.5 13 L3.5 13 Z" fill="#e8f4fc" stroke="#777" stroke-width="0.8"/></svg>
<div class="ts" style="left:1303px"></div>
<div class="a" style="left:1309px;top:140px;width:40px;height:16px;background:#fff;border-radius:2px;color:#1f5f9c;font-size:9px;line-height:15px;padding-left:5px">Очистить</div>


<div class="tr" style="top:162px"><b>Отчет</b><u>!Отчет по Авто + топливо НАШ</u></div>
<div class="tr" style="top:175px"><b>Объект</b><u>Вольво а457хе 126</u></div>
<div class="tr" style="top:188px"><b>Время выполнения отчета</b><u>17-ноября-2016 10:33</u></div>
<div class="tr" style="top:201px"><b>Пробег</b><u>49.19 км</u></div>
<div class="tr" style="top:214px"><b>Моточасы</b><u>9:09:17</u></div>
<div class="tr" style="top:227px"><b>Холостой ход</b><u>8:12:42</u></div>
<div class="tr" style="top:240px"><b>Потрачено по ДУТ</b><u>17.60 л</u></div>
<div class="tr" style="top:253px"><b>Ср. расход по ДУТ</b><u>35.78 л/100 км</u></div>
<div class="tr" style="top:266px"><b>Потрачено по ДУТ в поездках</b><u>10.48 л</u></div>
<div class="tr" style="top:279px"><b>Потрачено по ДУТ на холостом ходу</b><u>5.94 л</u></div>
<div class="tr" style="top:292px"><b>Нач. уровень</b><u>561.51 л</u></div>
<div class="tr" style="top:305px"><b>Конеч. уровень</b><u>543.91 л</u></div>
<div class="tr" style="top:318px"><b>Время в движении</b><u>1:06:47</u></div>
<div class="tr" style="top:331px"><b>Всего заправок</b><u>0</u></div>
<div class="tr" style="top:344px"><b>Всего заправлено</b><u>0.00 л</u></div>
<div class="tr" style="top:357px"><b>Всего сливов</b><u>0</u></div>
<div class="tr" style="top:370px"><b>Всего топлива слито</b><u>0.00 л</u></div>
<div class="tr" style="top:383px"><b>Пробег в моточасах</b><u>46.58 км</u></div>
<div class="tr" style="top:396px"><b>Потрачено по ДУТ в м/ч</b><u>17.19 л</u></div>
<div class="tr" style="top:409px"><b>Отклонение расхода по ДУТ в поездках</b><u>10.48 л</u></div>
<!-- FOOTER -->
<div id="ftr" class="a"></div>
<div class="a" style="left:0;top:590px;width:1333px;height:1px;background:#fff"></div>
<div class="a" style="left:0;top:612px;width:1333px;height:1px;background:#fff"></div>
<div class="a" style="left:29px;top:592px;width:1px;height:19px;background:#c6c7c9"></div>
<div class="a" style="left:56px;top:592px;width:1px;height:19px;background:#c6c7c9"></div>
<svg class="a" style="left:7px;top:595px" width="16" height="14" viewBox="0 0 16 14"><rect x="1" y="1" width="13" height="11" fill="#fff"/><rect x="5.2" y="2.3" width="7" height="8.5" fill="#8f9094"/></svg>
<svg class="a" style="left:36px;top:595px" width="14" height="13" viewBox="0 0 14 13"><g fill="#c5c6c8"><rect x="1" y="1" width="3.6" height="3.4"/><rect x="4.8" y="1" width="3.6" height="3.4"/><rect x="8.6" y="1" width="3.6" height="3.4"/><rect x="1" y="4.6" width="3.6" height="3.4"/><rect x="4.8" y="4.6" width="3.6" height="3.4"/><rect x="8.6" y="4.6" width="3.6" height="3.4"/><rect x="1" y="8.4" width="3.6" height="3.4"/><rect x="4.8" y="8.4" width="3.6" height="3.4"/><rect x="8.6" y="8.4" width="3.6" height="3.4"/></g></svg>
<div class="a" style="left:560px;top:595.5px;color:#fff;font-weight:bold;font-size:9.4px;line-height:11px;white-space:nowrap">© Gurtam</div>
<div class="a" style="left:1112px;top:592px;width:1px;height:19px;background:#c6c7c9"></div>
<div class="a" style="left:1240px;top:592px;width:1px;height:19px;background:#c6c7c9"></div>
<div class="a" style="left:1271px;top:592px;width:1px;height:19px;background:#c6c7c9"></div>
<svg class="a" style="left:1120px;top:595px" width="16" height="13" viewBox="0 0 16 13"><rect x="1" y="1" width="14" height="10.7" fill="#b8b9bc"/><rect x="2.3" y="2.3" width="11.4" height="1.8" fill="#9c9da1"/><rect x="3.5" y="6" width="9" height="0.9" fill="#a3a4a7"/><rect x="3.5" y="8" width="6" height="0.9" fill="#a3a4a7"/></svg>
<svg class="a" style="left:1158px;top:595px" width="20" height="13" viewBox="0 0 20 13"><rect x="1" y="1.5" width="13" height="9.5" fill="#b8b9bc"/><path d="M1 1.5 L7.5 7 L14 1.5" fill="none" stroke="#9c9da1" stroke-width="1"/><path d="M10.5 8.8 L14.5 8.8 L14.5 6.5 L18.5 9.5 L14.5 12.5 L14.5 10.3 L10.5 10.3 Z" fill="#b8b9bc" stroke="#9c9da1" stroke-width="0.6"/></svg>
<svg class="a" style="left:1200px;top:595px" width="15" height="13" viewBox="0 0 15 13"><rect x="1" y="1" width="13" height="11" fill="#b8b9bc"/><path d="M1.8 11 L5.5 6.5 L8 8.8 L10 7 L13.2 11 Z" fill="#9c9da1"/><circle cx="4.5" cy="3.8" r="1.2" fill="#9c9da1"/></svg>
<div class="a" style="left:1137px;top:596px;width:13px;height:11px;border-radius:6px;background:#77787b;color:#fff;font-weight:bold;font-size:9.5px;text-align:center;line-height:11.5px">0</div>
<div class="a" style="left:1179px;top:596px;width:13px;height:11px;border-radius:6px;background:#77787b;color:#fff;font-weight:bold;font-size:9.5px;text-align:center;line-height:11.5px">0</div>
<div class="a" style="left:1216px;top:596px;width:13px;height:11px;border-radius:6px;background:#77787b;color:#fff;font-weight:bold;font-size:9.5px;text-align:center;line-height:11.5px">0</div>
<svg class="a" style="left:1246px;top:596px" width="18" height="12" viewBox="0 0 18 12"><rect x="1" y="1" width="7.5" height="9.5" fill="#fff"/><rect x="9.3" y="1" width="7.5" height="9.5" fill="#fff"/><path d="M2.3 3 L6 3 M2.3 5 L6 5 M2.3 7 L4.5 7 M2.3 9 L5 9" stroke="#9c9da1" stroke-width="0.8"/></svg>
<div class="a" style="left:1287px;top:596px;color:#fff;font-weight:bold;font-size:9px;line-height:11px;white-space:nowrap">10:33:51 (+03)</div>
<div id="ftrbot" class="a"></div>
</body></html>
